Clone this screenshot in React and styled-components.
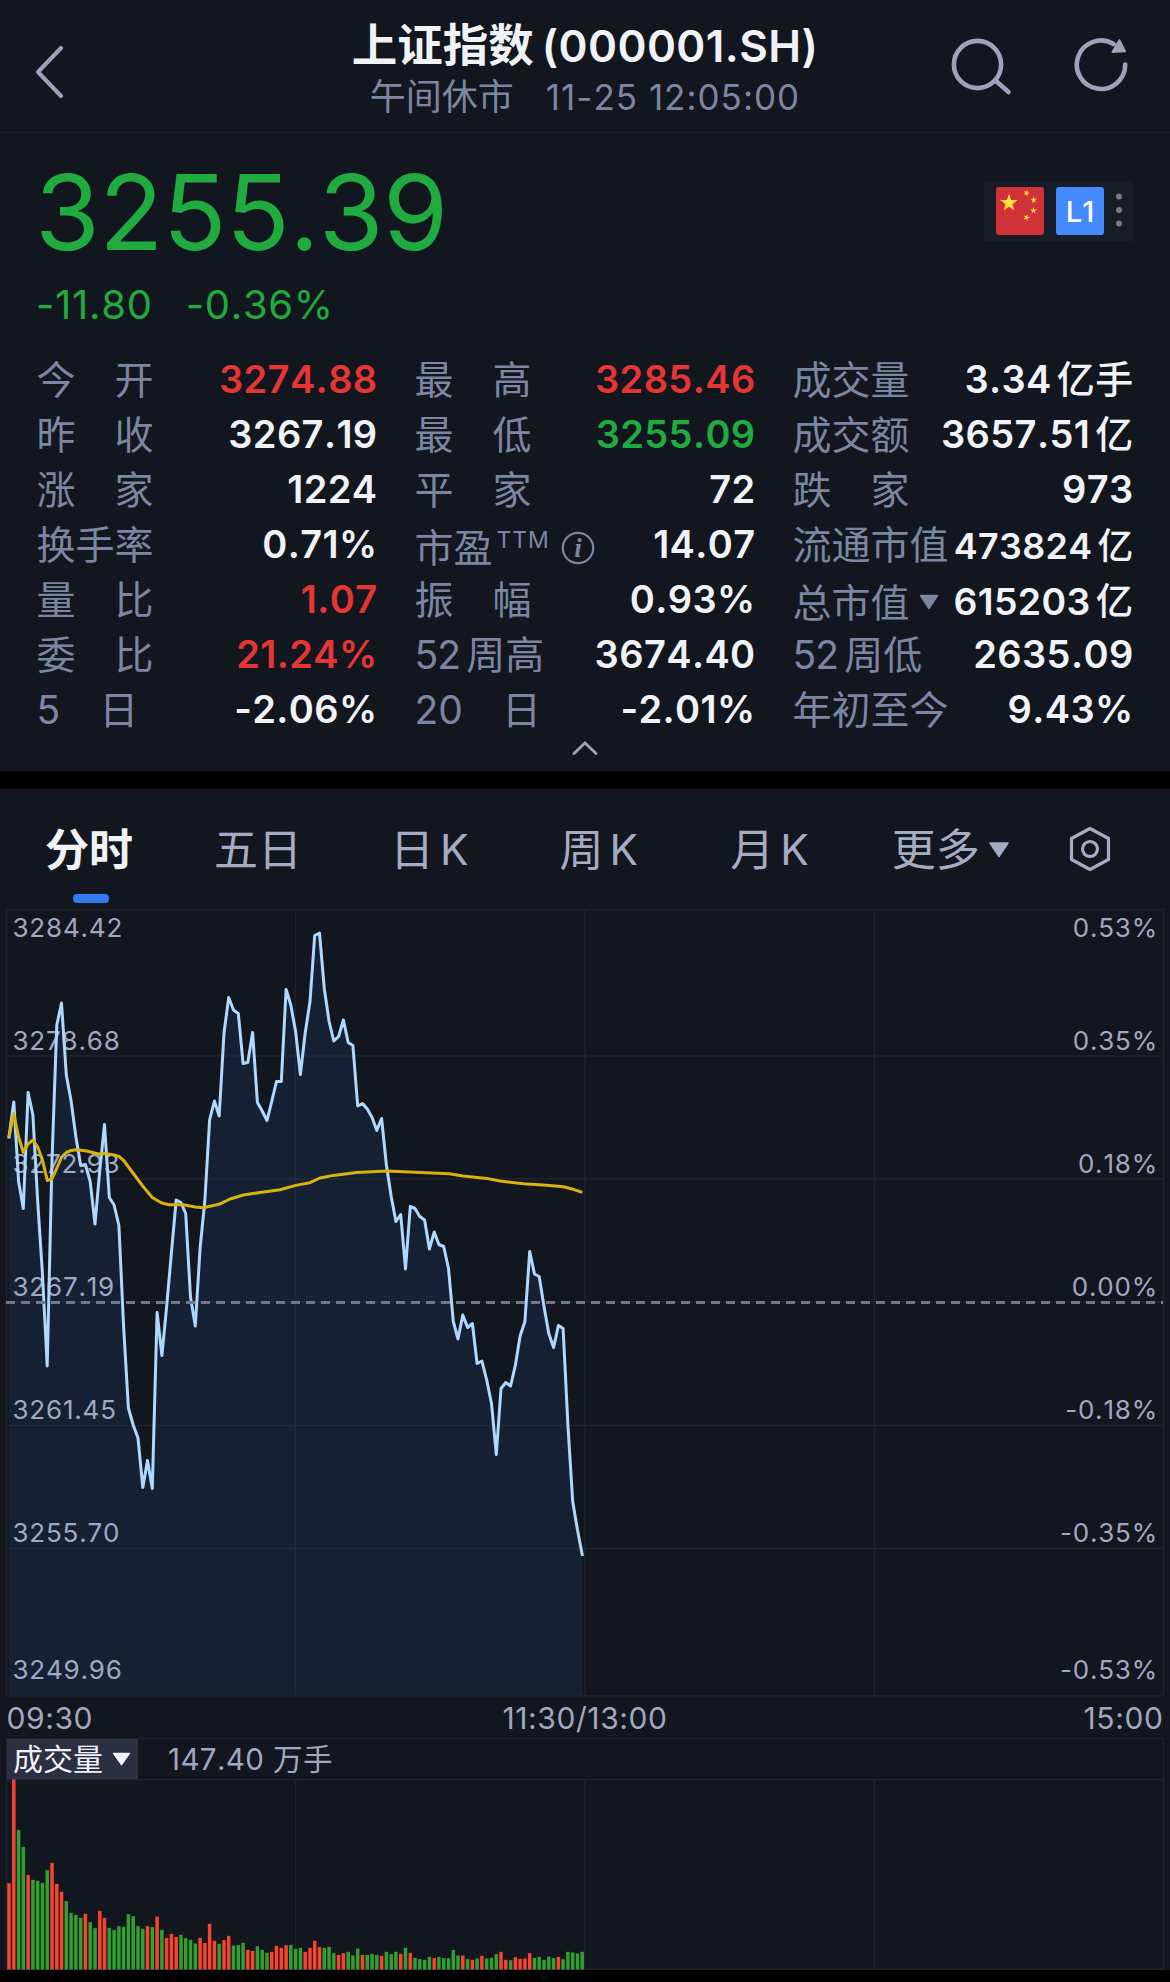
import React, { useState } from 'react';
import styled, { createGlobalStyle, css } from 'styled-components';

const COLORS = {
  red: '#e63535',
  green: '#1fab3f',
  white: '#f1f2f7',
  label: '#7b86a2',
  icon: '#9aa3b8',
  axis: '#a0a8c0',
  grid: '#1e232e',
};

const quotes = [
  { label: '今　开', value: '3274.88', color: 'red' },
  { label: '最　高', value: '3285.46', color: 'red' },
  { label: '成交量', value: '3.34', unit: '亿手' },
  { label: '昨　收', value: '3267.19' },
  { label: '最　低', value: '3255.09', color: 'green' },
  { label: '成交额', value: '3657.51', unit: '亿' },
  { label: '涨　家', value: '1224' },
  { label: '平　家', value: '72' },
  { label: '跌　家', value: '973' },
  { label: '换手率', value: '0.71%' },
  { label: '市盈', value: '14.07', sup: 'TTM', info: true },
  { label: '流通市值', value: '473824', unit: '亿', size: 35.8 },
  { label: '量　比', value: '1.07', color: 'red' },
  { label: '振　幅', value: '0.93%' },
  { label: '总市值', value: '615203', unit: '亿', size: 37.4, arrow: true },
  { label: '委　比', value: '21.24%', color: 'red' },
  { num: '52', label: '周高', value: '3674.40' },
  { num: '52', label: '周低', value: '2635.09' },
  { label: '5　日', value: '-2.06%' },
  { label: '20　日', value: '-2.01%' },
  { label: '年初至今', value: '9.43%' },
];

const tabs = [
  { id: 1, name: '分时', left: 45 },
  { id: 2, name: '五日', left: 81 },
  { id: 3, name: '日', latin: 'K', left: 88 },
  { id: 4, name: '周', latin: 'K', left: 91 },
  { id: 5, name: '月', latin: 'K', left: 92 },
  { id: 6, name: '更多', left: 83, arrow: true },
];

const axis = [
  { price: '3284.42', rate: '0.53%', y: 28 },
  { price: '3278.68', rate: '0.35%', y: 141 },
  { price: '3272.93', rate: '0.18%', y: 264 },
  { price: '3267.19', rate: '0.00%', y: 387 },
  { price: '3261.45', rate: '-0.18%', y: 510 },
  { price: '3255.70', rate: '-0.35%', y: 633 },
  { price: '3249.96', rate: '-0.53%', y: 770 },
];

// one point per minute, 09:30 - 11:30
const STEP = 4.777;
const START = 9;
const prices = [
  228, 193, 272.5, 299.5, 183.5, 206, 292.5, 364, 457, 251, 116, 94, 166, 192, 228,
  256.5, 255.5, 272.5, 315, 261, 215.5, 288.5, 296, 316.5, 417.5, 499, 516, 529, 578.5, 551.5,
  579.5, 403.5, 446.5, 398, 344, 291, 293.5, 304.5, 388, 417, 339, 291, 211, 192, 207,
  124, 88.5, 101, 104.5, 154.5, 153.5, 123.5, 193.5, 202, 211.5, 192.5, 172.5, 172.5, 80.5, 96,
  122.5, 165.5, 124, 92.5, 26.5, 24, 79.5, 112.5, 132, 127.5, 111, 133.5, 136.5, 197, 194.5,
  200, 208.5, 221.5, 209.5, 256, 287.5, 312.5, 305.5, 360, 297.5, 299.5, 307.5, 311, 340, 323,
  335.5, 337.5, 359.5, 412.5, 430, 406, 418.5, 414.5, 454.5, 452, 471, 494.5, 545.5, 479.5, 473.5,
  477, 456, 427, 412.5, 342.5, 365, 367.5, 397.5, 424.5, 438.5, 416.5, 419.5, 516, 592.5, 621, 645.5,
];
const average = [
  [9, 228], [13.7, 204.5], [18.6, 228], [23.3, 243.5], [28, 235], [33, 231], [37.7, 238], [42.5, 251],
  [47.3, 271.5], [52, 269.5], [56.7, 259.5], [61.7, 248], [66.3, 243.5], [71, 241.5], [76, 240.7],
  [85.3, 241.7], [90, 242.7], [98.3, 245], [104.7, 244.5], [114, 246], [119, 247.5], [123.7, 251.5],
  [133.3, 264.5], [142.7, 277], [152.3, 288.5], [161.7, 294], [169, 295.7], [183.3, 295.7], [195.3, 298],
  [203.3, 298.7], [219, 295.3], [230, 290], [243.3, 286], [258.3, 283.7], [280, 280.7], [295.7, 276.4],
  [310, 273.7], [320, 269], [333.3, 266.4], [356.7, 263.4], [386.7, 262], [410, 263], [449, 264.7],
  [463.3, 267], [486.7, 269.4], [500, 272], [523.3, 274.7], [546.7, 276.3], [563.3, 277.7], [573.3, 280.3], [582.3, 283.4],
];
const volumes = [
  259, 570, 419, 368, 284, 269, 266, 260, 298, 320, 257, 233, 205, 170, 164, 155, 167, 142, 124, 176,
  155, 125, 119, 130, 128, 166, 160, 130, 122, 130, 127, 159, 119, 95, 107, 98, 104, 94, 89, 78,
  95, 80, 137, 86, 77, 88, 101, 72, 73, 80, 59, 56, 70, 59, 50, 53, 71, 65, 73, 74,
  62, 65, 53, 65, 86, 68, 65, 68, 49, 44, 49, 53, 42, 63, 44, 44, 47, 44, 41, 53,
  46, 53, 47, 65, 50, 35, 31, 29, 38, 35, 38, 34, 34, 59, 42, 42, 31, 29, 33, 41,
  33, 35, 46, 53, 29, 28, 37, 32, 33, 49, 35, 38, 29, 39, 34, 38, 31, 53, 51, 48, 53,
];
const ups = [
  0, 1, 4, 9, 10, 11, 16, 19, 20, 29, 31, 33, 34, 35, 40, 41, 42, 43, 45, 46, 50, 51, 55, 56, 57, 58,
  62, 63, 64, 65, 69, 70, 74, 78, 82, 84, 89, 95, 97, 99, 103, 104, 106, 107, 108, 109, 115,
];

const px = (i) => (START + i * STEP).toFixed(1);

function Header(){
  return(
    <StyledHeader>
      <BackButton>
        <svg width="30" height="52" viewBox="0 0 30 52" fill="none" stroke={COLORS.icon} strokeWidth="4" strokeLinecap="round" strokeLinejoin="round">
          <path d="M26 2 L3 26 L26 50" />
        </svg>
      </BackButton>
      <Titles>
        <Title>上证指数<Latin>(000001.SH)</Latin></Title>
        <Status>午间休市<Time>11-25 12:05:00</Time></Status>
      </Titles>
      <HeaderIcons>
        <svg width="62" height="60" viewBox="0 0 62 60" fill="none" stroke={COLORS.icon} strokeWidth="4.6" strokeLinecap="round">
          <circle cx="27.5" cy="27.5" r="23.6" />
          <path d="M46 44 L58.5 55" />
        </svg>
        <svg width="56" height="56" viewBox="0 0 56 56" fill="none" stroke={COLORS.icon} strokeWidth="4.6" strokeLinecap="round">
          <path d="M52.2 27.5 A24.2 24.2 0 1 1 40.5 7" />
          <path d="M46.4 3.2 L52 14.3 L39.5 15 Z" fill={COLORS.icon} strokeWidth="2" strokeLinejoin="round" />
        </svg>
      </HeaderIcons>
    </StyledHeader>
  );
}

const STAR = '0,-9.2 2.1,-2.9 8.8,-2.9 3.4,1.2 5.4,7.5 0,3.7 -5.4,7.5 -3.4,1.2 -8.8,-2.9 -2.1,-2.9';

function Badges(){
  return(
    <StyledBadges>
      <svg width="48" height="48" viewBox="0 0 48 48">
        <rect width="48" height="48" rx="3" fill="#d13237" />
        <g fill="#fbdf3c">
          <polygon points={STAR} transform="translate(13 16)" />
          <polygon points={STAR} transform="translate(30.5 6) rotate(20) scale(.38)" />
          <polygon points={STAR} transform="translate(37.8 13) rotate(-10) scale(.38)" />
          <polygon points={STAR} transform="translate(37.5 23.5) scale(.38)" />
          <polygon points={STAR} transform="translate(30.5 30.5) rotate(20) scale(.38)" />
        </g>
      </svg>
      <Level>L1</Level>
      <Dots width="6" height="34" viewBox="0 0 6 34" fill="#777b86">
        <circle cx="3" cy="3.5" r="3" />
        <circle cx="3" cy="17" r="3" />
        <circle cx="3" cy="30.5" r="3" />
      </Dots>
    </StyledBadges>
  );
}

function Quote(props){
  const { item } = props;
  return(
    <QuoteItem>
      <Label $low={item.info || item.arrow}>
        {item.num && <Num>{item.num}</Num>}
        {item.label}
        {item.sup && <Sup>{item.sup}</Sup>}
        {item.info && (
          <InfoIcon width="34" height="34" viewBox="0 0 34 34">
            <circle cx="17" cy="17" r="15.2" fill="none" stroke={COLORS.label} strokeWidth="2.2" />
            <InfoMark x="17" y="25.6" textAnchor="middle">i</InfoMark>
          </InfoIcon>
        )}
        {item.arrow && (
          <DownArrow width="20" height="16" viewBox="0 0 20 16" $color={COLORS.label}>
            <path d="M1.5 1.5 H18.5 L10 14.5 Z" />
          </DownArrow>
        )}
      </Label>
      <Value $color={item.color} $size={item.size}>
        {item.value}{item.unit && <Unit>{item.unit}</Unit>}
      </Value>
    </QuoteItem>
  );
}

function PriceChart(){
  const line = prices.map((y, i) => `${px(i)},${y}`).join(' ');
  return(
    <svg width="1170" height="788" viewBox="0 0 1170 788">
      <g fill="none" stroke={COLORS.grid} strokeWidth="1.5">
        <rect x="6.5" y="0.8" width="1157" height="786" />
        <path d="M295.5 1 V786 M585 1 V786 M874.5 1 V786" />
        <path d="M7 147 H1163 M7 269.7 H1163 M7 393 H1163 M7 516.5 H1163 M7 639.5 H1163" />
      </g>
      <polygon points={`9,786 ${line} 582.3,786`} fill="#223e72" fillOpacity="0.25" />
      <AxisText>
        {axis.map((a) => (
          <g key={a.price}>
            <text x="12.5" y={a.y}>{a.price}</text>
            <text x="1158" y={a.y} textAnchor="end">{a.rate}</text>
          </g>
        ))}
      </AxisText>
      <polyline points={line} fill="none" stroke="#afd8ff" strokeWidth="3" strokeLinejoin="round" strokeLinecap="square" />
      <polyline points={average.map((p) => p.join(',')).join(' ')} fill="none" stroke="#d8b20f" strokeWidth="3" strokeLinejoin="round" />
      <path d="M6 393.5 H1163" stroke="#6e7690" strokeWidth="3" strokeDasharray="9 6" />
    </svg>
  );
}

function VolumeChart(){
  return(
    <svg width="1170" height="191" viewBox="0 0 1170 191">
      <path d="M6.5 0 V190 M295.5 0 V190 M585 0 V190 M874.5 0 V190 M1163.5 0 V190 M6 190 H1164 M6 0.5 H1164" stroke={COLORS.grid} strokeWidth="1.5" fill="none" />
      {volumes.map((v, i) => (
        <rect
          key={i}
          x={px(i) - 1.75}
          y={190.5 - v / 3}
          width="3.5"
          height={v / 3}
          fill={ups.includes(i) ? '#f8432f' : '#31a030'}
        />
      ))}
    </svg>
  );
}

function App(){
  const [selected, setSelected] = useState(1);
  return(
    <Page>
      <GlobalStyle />
      <Header />
      <Summary>
        <PriceRow>
          <Price>3255.39</Price>
          <Badges />
        </PriceRow>
        <Change>
          <span>-11.80</span>
          <span>-0.36%</span>
        </Change>
        <QuoteGrid>
          {quotes.map((item, i) => <Quote key={i} item={item} />)}
        </QuoteGrid>
        <Fold>
          <svg width="28" height="16" viewBox="0 0 28 16" fill="none" stroke={COLORS.icon} strokeWidth="2.8" strokeLinecap="round">
            <path d="M3 13.5 L14 3 L25 13.5" />
          </svg>
        </Fold>
      </Summary>
      <Tabs>
        {tabs.map((t) => (
          <Tab key={t.id} $left={t.left} $active={t.id === selected} onClick={() => setSelected(t.id)}>
            {t.name}
            {t.latin && <TabLatin>{t.latin}</TabLatin>}
            {t.arrow && (
              <DownArrow width="20" height="17" viewBox="0 0 20 16" $color="#a4acc4">
                <path d="M1 1.5 H19 L10 15 Z" />
              </DownArrow>
            )}
          </Tab>
        ))}
        <Setting width="42" height="46" viewBox="0 0 42 46" fill="none" stroke="#a4acc4" strokeWidth="3.2" strokeLinejoin="round">
          <path d="M21 2.5 L39.5 12.5 V33.5 L21 43.5 L2.5 33.5 V12.5 Z" />
          <circle cx="21" cy="23" r="7.5" />
        </Setting>
      </Tabs>
      <PriceChart />
      <TimeAxis>
        <span>09:30</span>
        <span>11:30/13:00</span>
        <span>15:00</span>
      </TimeAxis>
      <VolumeBar>
        <VolumeSelect>
          成交量
          <DownArrow width="19" height="14" viewBox="0 0 20 15" $color={COLORS.white}>
            <path d="M1.5 1.5 H18.5 L10 13.5 Z" />
          </DownArrow>
        </VolumeSelect>
        <VolumeTotal>147.40 万手</VolumeTotal>
      </VolumeBar>
      <VolumeChart />
    </Page>
  );
}

const GlobalStyle = createGlobalStyle`
  body {
    margin: 0;
    background: #000;
  }
  svg {
    display: block;
    flex-shrink: 0;
  }
`;
const Page = styled.div`
  width: 1170px;
  height: 1970px;
  overflow: hidden;
  background: #12161e;
  border-bottom: 12px solid #000;
  font-family: Inter, 'Noto Sans CJK SC', sans-serif;
  font-kerning: none;
  white-space: nowrap;
`;
const StyledHeader = styled.div`
  display: grid;
  grid-template-columns: 250px 1fr 250px;
  height: 132px;
  border-bottom: 1.5px solid #1a1f28;
`;
const BackButton = styled.div`
  padding: 46px 0 0 35px;
`;
const Titles = styled.div`
  padding-top: 21px;
  text-align: center;
`;
const Title = styled.div`
  line-height: 50px;
  font-size: 45.5px;
  font-weight: 600;
  color: ${COLORS.white};
`;
const Latin = styled.span`
  margin-left: 8px;
  font-size: 44px;
  letter-spacing: 0.4px;
`;
const Status = styled.div`
  line-height: 52px;
  font-size: 36px;
  color: ${COLORS.label};
`;
const Time = styled.span`
  margin-left: 32px;
  font-size: 35px;
  letter-spacing: 1px;
`;
const HeaderIcons = styled.div`
  display: flex;
  gap: 61px;
  padding: 37px 0 0 30px;
`;
const Summary = styled.div`
  height: 638px;
  border-bottom: 18px solid #000;
`;
const PriceRow = styled.div`
  display: flex;
  justify-content: space-between;
  height: 142px;
  padding: 0 36px 0 35px;
`;
const Price = styled.div`
  padding-top: 26px;
  line-height: 106px;
  font-size: 105px;
  letter-spacing: -0.6px;
  color: ${COLORS.green};
`;
const StyledBadges = styled.div`
  display: flex;
  align-items: center;
  gap: 12px;
  box-sizing: border-box;
  width: 150px;
  height: 60px;
  margin-top: 48px;
  padding-left: 12px;
  background: #171c27;
`;
const Level = styled.div`
  width: 48px;
  line-height: 49px;
  height: 48px;
  border-radius: 3px;
  background: #448aff;
  color: #fff;
  font-size: 29px;
  font-weight: 500;
  text-align: center;
`;
const Dots = styled.svg`
  margin-top: -3px;
`;
const Change = styled.div`
  display: flex;
  gap: 33px;
  padding-left: 36px;
  line-height: 60px;
  font-size: 40px;
  letter-spacing: 0.7px;
  color: ${COLORS.green};
`;
const QuoteGrid = styled.div`
  display: grid;
  grid-template-columns: repeat(3, 340px);
  grid-auto-rows: 55px;
  column-gap: 38px;
  padding: 16px 0 0 37px;
`;
const QuoteItem = styled.div`
  display: flex;
  justify-content: space-between;
  line-height: 57px;
`;
const Label = styled.div`
  display: flex;
  height: 55px;
  margin-left: -0.5px;
  font-size: 39px;
  color: ${COLORS.label};
  ${({ $low }) => $low && css`
    padding-top: 3px;
  `}
`;
const Num = styled.span`
  margin-right: 6px;
  letter-spacing: -0.9px;
`;
const Sup = styled.span`
  margin-left: 4px;
  line-height: 42px;
  font-size: 23px;
  letter-spacing: 0.9px;
`;
const InfoIcon = styled.svg`
  margin: 12px 0 0 11px;
`;
const InfoMark = styled.text`
  font: italic bold 27px 'Liberation Serif', serif;
  fill: ${COLORS.label};
`;
const DownArrow = styled.svg`
  align-self: center;
  margin-left: 9px;
  fill: ${({ $color }) => $color};
  stroke: ${({ $color }) => $color};
  stroke-width: 1.5;
  stroke-linejoin: round;
`;
const Value = styled.div`
  padding-top: ${({ $size }) => ($size ? 2 : 0)}px;
  margin-right: -0.6px;
  font-size: ${({ $size }) => $size || 38}px;
  font-weight: 600;
  letter-spacing: 0.4px;
  color: ${({ $color }) => COLORS[$color || 'white']};
`;
const Unit = styled.span`
  margin-left: 5px;
  font-weight: 500;
`;
const Fold = styled.div`
  display: flex;
  justify-content: center;
  padding-top: 4px;
`;
const Tabs = styled.div`
  display: flex;
  height: 120px;
  line-height: 122px;
`;
const Tab = styled.div`
  position: relative;
  display: flex;
  height: 120px;
  margin-left: ${({ $left }) => $left}px;
  font-size: 44px;
  color: #a4acc4;
  ${({ $active }) => $active && css`
    font-weight: 600;
    color: ${COLORS.white};
    &::after {
      content: '';
      position: absolute;
      left: 28px;
      bottom: 6px;
      width: 36px;
      height: 9px;
      border-radius: 4px;
      background: #2f7bf0;
    }
  `}
`;
const TabLatin = styled.span`
  margin-left: 6px;
  font-size: 42.5px;
`;
const Setting = styled.svg`
  align-self: center;
  margin-left: 60px;
`;
const AxisText = styled.g`
  font-size: 26px;
  letter-spacing: 0.8px;
  fill: ${COLORS.axis};
`;
const TimeAxis = styled.div`
  display: grid;
  grid-template-columns: 1fr auto 1fr;
  height: 41px;
  padding: 0 6.5px;
  line-height: 43px;
  font-size: 30px;
  letter-spacing: 0.6px;
  color: ${COLORS.axis};
  span:last-child {
    text-align: right;
  }
`;
const VolumeBar = styled.div`
  display: flex;
  height: 40px;
  margin: 0 6px;
  border: 1.5px solid ${COLORS.grid};
  border-bottom: 0;
  line-height: 41px;
  font-size: 30px;
`;
const VolumeSelect = styled.div`
  display: flex;
  box-sizing: border-box;
  width: 131px;
  padding-left: 6px;
  background: #293042;
  color: ${COLORS.white};
`;
const VolumeTotal = styled.div`
  margin-left: 30px;
  font-size: 29.5px;
  letter-spacing: 0.4px;
  color: ${COLORS.axis};
`;

export default App;
